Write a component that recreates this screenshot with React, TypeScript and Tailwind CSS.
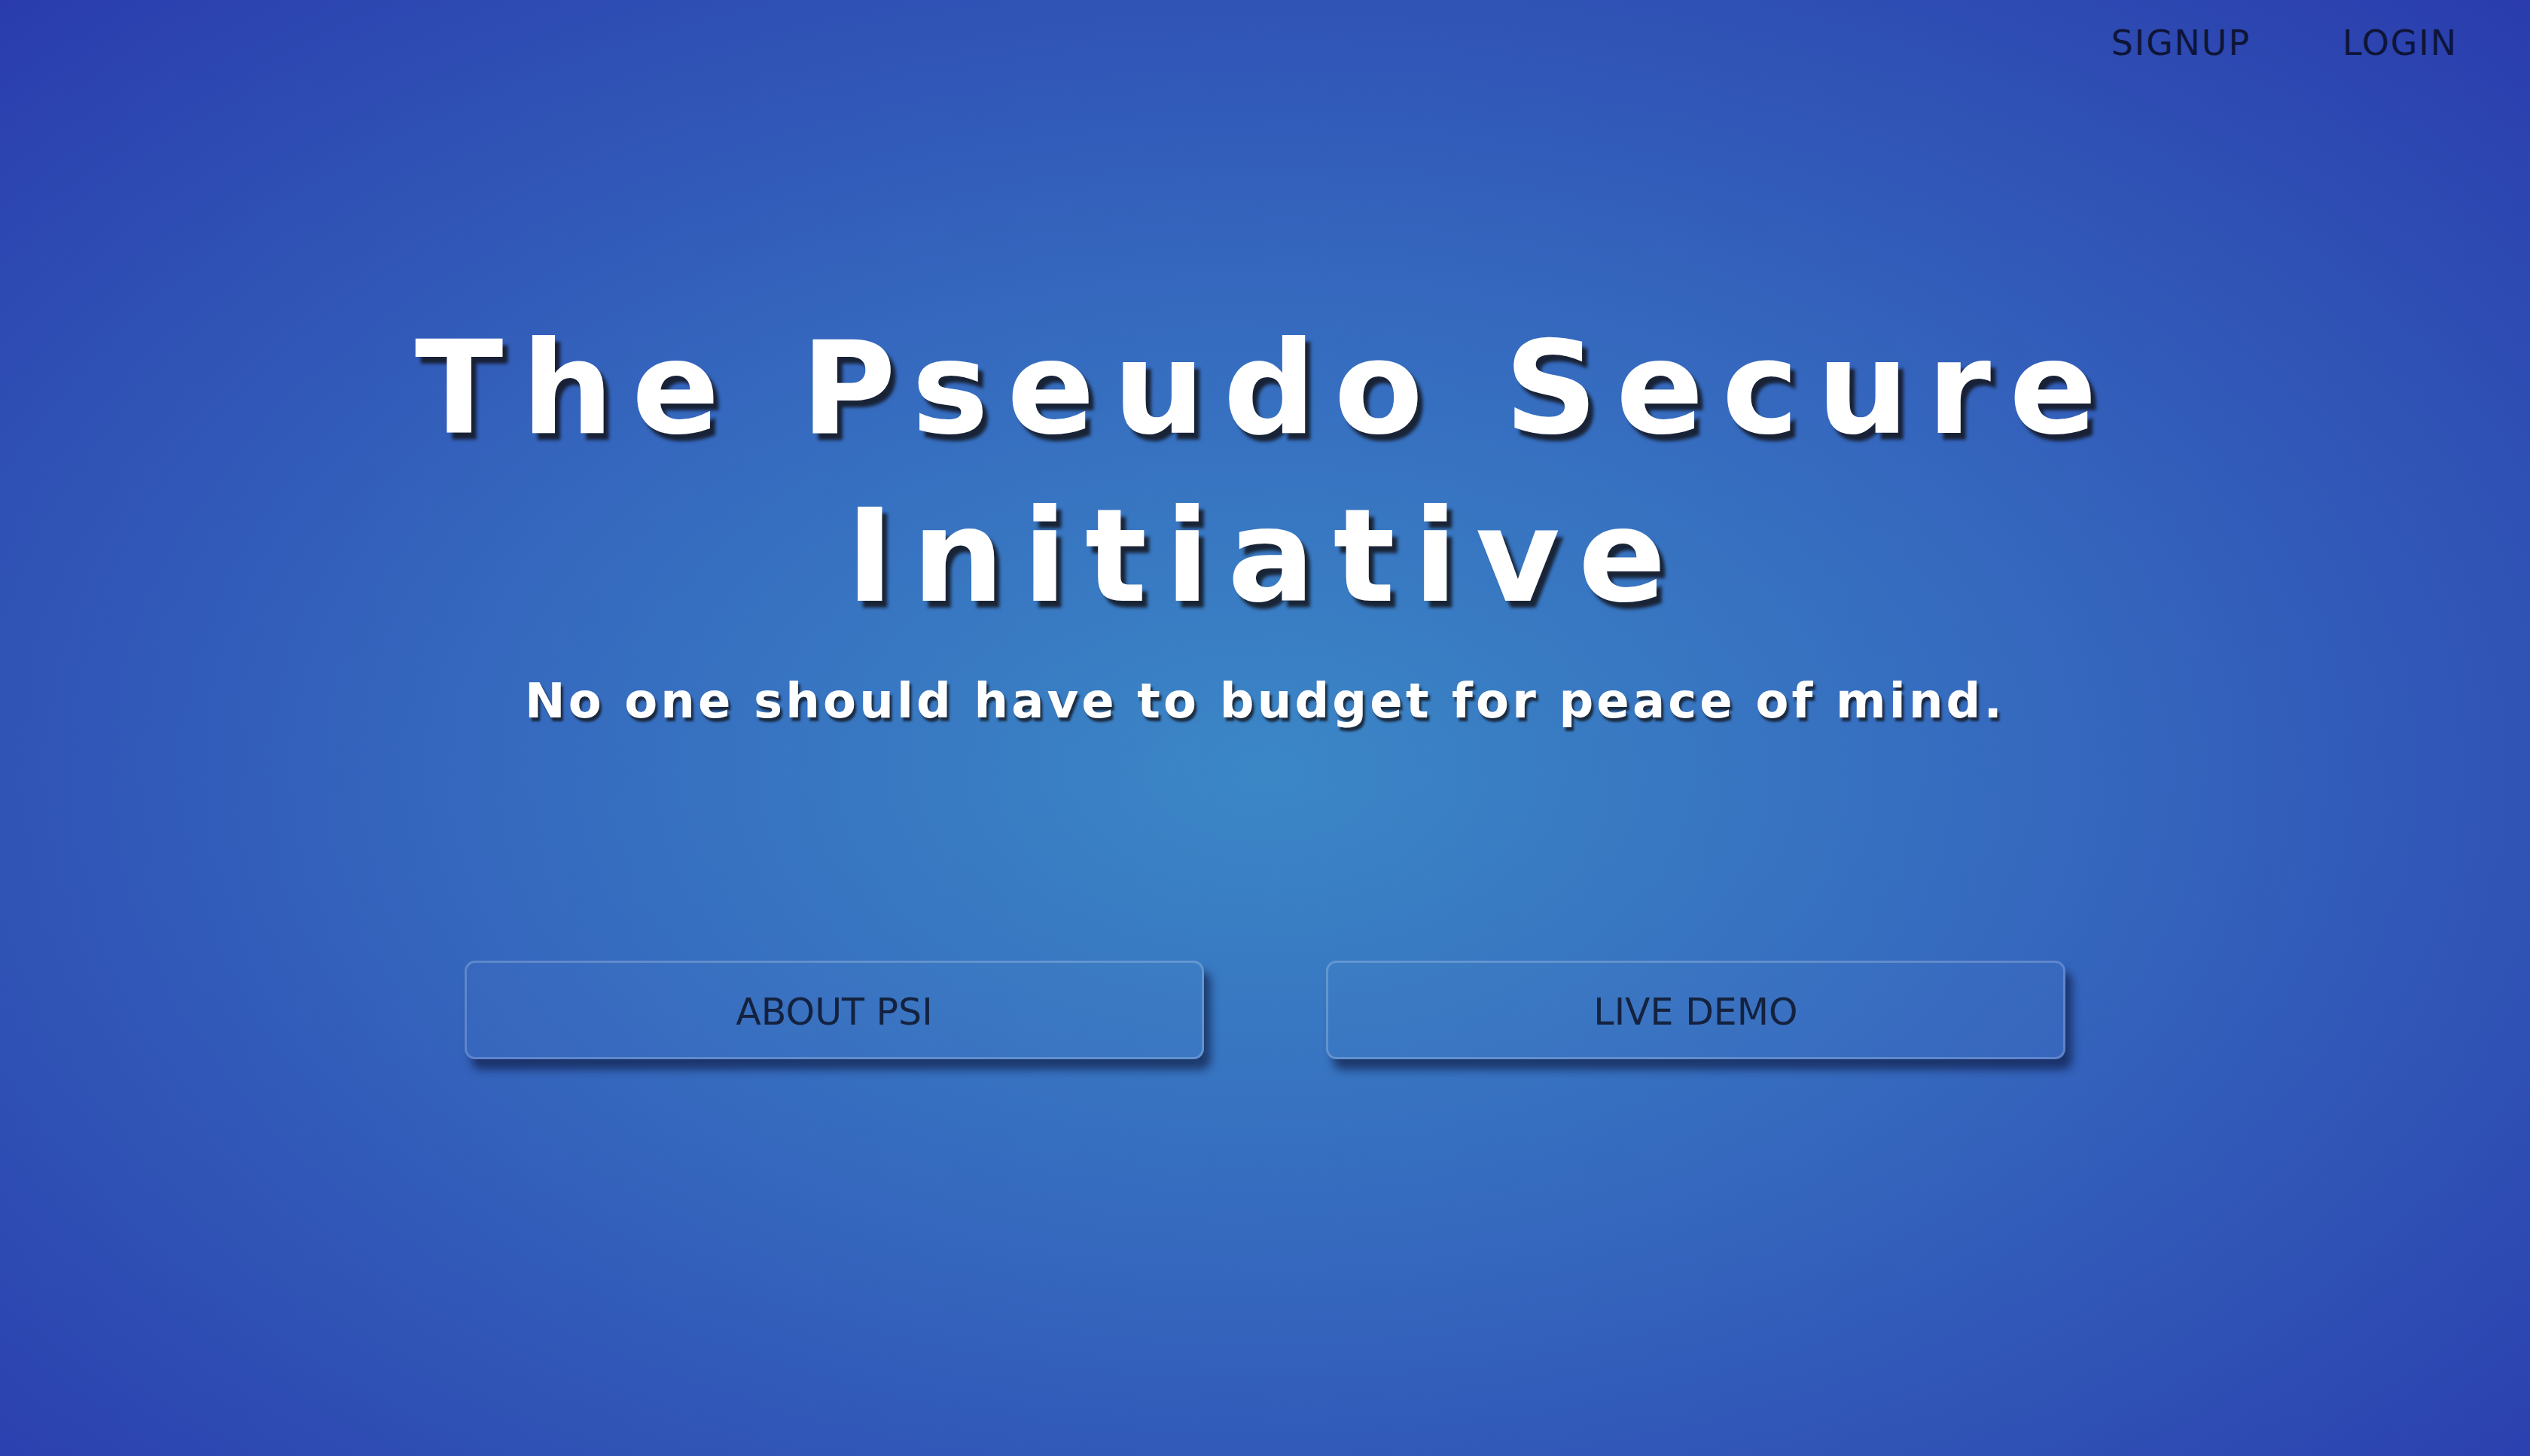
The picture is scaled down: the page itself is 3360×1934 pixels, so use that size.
const App = () => {
  const buttons = ['ABOUT PSI', 'LIVE DEMO'];

  return (
    <div className="w-full min-h-[1934px] flex flex-col bg-[radial-gradient(ellipse_at_50%_53%,#3b87c6_0%,#3568be_45%,#2a3cad_100%)] font-['DejaVu_Sans',sans-serif]">
      {/* top nav */}
      <nav className="flex justify-end gap-[122px] pt-[30px] pr-[96px] text-[46px] leading-[1.2] tracking-[0.04em] text-[#0e1538]">
        <a href="#" className="hover:text-white">SIGNUP</a>
        <a href="#" className="hover:text-white">LOGIN</a>
      </nav>

      <main className="flex flex-col items-center">
        <h1 className="mt-[319px] text-center text-white font-bold text-[172px] leading-[223px] tracking-[0.14em] [text-shadow:7px_9px_4px_rgba(20,22,30,0.85)]">
          The Pseudo Secure
          <br />
          Initiative
        </h1>
        <p className="mt-[43px] text-white font-bold text-[64px] leading-[1.2] tracking-[0.065em] [text-shadow:3px_5px_3px_rgba(20,22,30,0.8)]">
          No one should have to budget for peace of mind.
        </p>

        <div className="mt-[306px] flex gap-[162px]">
          {buttons.map((label) => (
            <button
              key={label}
              className="w-[982px] h-[131px] pt-[6px] rounded-[14px] border-[3px] border-white/20 bg-white/[0.02] text-[49px] text-[#14223f] shadow-[9px_14px_12px_rgba(12,20,55,0.6)] hover:bg-white/10 transition-colors"
            >
              {label}
            </button>
          ))}
        </div>
      </main>
    </div>
  );
};

export default App;
